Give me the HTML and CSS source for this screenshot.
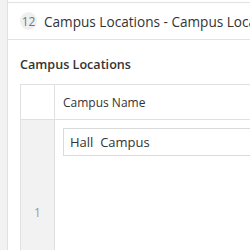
FILE: index.html
```html
<!DOCTYPE html>
<html lang="en">
<head>
  <meta charset="UTF-8">
  <title>Campus Locations</title>
  <link rel="stylesheet" href="styles.css">
</head>
<body>
<div class="shell">
  <div class="rail"></div>
  <div class="main">
    <div class="head">
      <span class="badge">12</span>
      <span class="head-title">Campus Locations - Campus Locations</span>
    </div>
    <div class="section">
      <div class="section-title">Campus Locations</div>
      <table class="grid">
        <tr class="grid-head">
          <th class="num"></th>
          <th class="col">Campus Name</th>
        </tr>
        <tr class="grid-row">
          <td class="num">1</td>
          <td class="cell"><input class="field" type="text" value="Hall  Campus"></td>
        </tr>
      </table>
    </div>
  </div>
</div>
</body>
</html>
```

FILE: styles.css
```css
html, body {
  margin: 0;
  padding: 0;
  background: #fff;
  color: #333;
  font-family: 'Open Sans', 'Noto Sans', sans-serif;
  overflow: hidden;
  height: 100%;
}
.shell {
  display: flex;
  height: 100%;
}
.rail {
  width: 7px;
  flex: none;
  background: #f2f2f2;
  border-right: 1px solid #e2e2e2;
}
.main {
  flex: 1;
  min-width: 0;
  margin-top: 2px;
  border-top: 1px solid #e2e2e2;
  overflow: hidden;
}
.head {
  display: flex;
  align-items: center;
  gap: 7px;
  height: 36px;
  padding-left: 12px;
  border-bottom: 1px solid #e2e2e2;
  white-space: nowrap;
  overflow: hidden;
}
.badge {
  display: flex;
  align-items: center;
  justify-content: center;
  width: 17px;
  height: 18px;
  border-radius: 50%;
  background: #efefef;
  color: #777;
  font-size: 12px;
  flex: none;
}
.head-title {
  font-size: 13.6px;
  color: #333;
}
.section {
  padding: 15px 0 0 12px;
}
.section-title {
  font-size: 12.6px;
  font-weight: 600;
  color: #333;
  line-height: 20px;
  margin-bottom: 9px;
}
.grid {
  border-collapse: collapse;
  width: 400px;
  border: 1px solid #e0e0e0;
}
.grid th, .grid td {
  border: 1px solid #e0e0e0;
  padding: 0;
}
.num {
  width: 33px;
  text-align: center;
  font-size: 12px;
  color: #999;
  font-weight: normal;
}
.grid-row .num {
  background: #f2f2f2;
  padding-bottom: 6px !important;
}
.grid-head th {
  height: 34px;
}
.col {
  text-align: left;
  font-size: 12px;
  font-weight: normal;
  color: #333;
  padding-left: 8px !important;
}
.grid-row td {
  height: 182px;
}
.cell {
  vertical-align: top;
  padding: 8px 0 0 8px !important;
}
.field {
  display: block;
  box-sizing: border-box;
  width: 300px;
  height: 28px;
  border: 1px solid #dadada;
  padding: 0 6px;
  font-family: inherit;
  font-size: 13px;
  color: #333;
  outline: none;
}
```
